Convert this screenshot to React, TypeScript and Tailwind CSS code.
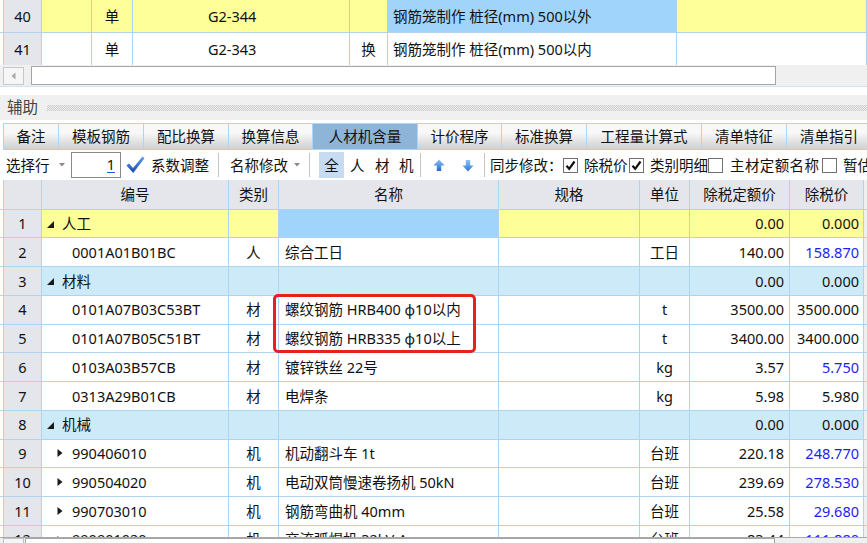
import React from "react";

const G = "border-[#afd4f1]";
const FONT = "font-['Noto_Sans','Noto_Sans_CJK_SC',sans-serif]";

function TriGroup() {
  return (
    <svg width="7" height="7" viewBox="0 0 7 7" className="shrink-0 mt-[2px]">
      <polygon points="7,0 7,7 0,7" fill="#1a1a1a" />
    </svg>
  );
}

function TriRight() {
  return (
    <svg width="6" height="10" viewBox="0 0 6 10" className="shrink-0">
      <polygon points="0.5,1 5.5,5 0.5,9" fill="#1a1a1a" />
    </svg>
  );
}

function Caret() {
  return (
    <svg width="6" height="4" viewBox="0 0 6 4" className="shrink-0">
      <polygon points="0,0 6,0 3,3.5" fill="#8a8a8a" />
    </svg>
  );
}

function BlueCheck() {
  return (
    <svg width="19" height="18" viewBox="0 0 19 18" className="shrink-0">
      <defs>
        <linearGradient id="bc" x1="0" y1="0" x2="0" y2="1">
          <stop offset="0" stopColor="#5f9ff0" />
          <stop offset="1" stopColor="#1448b0" />
        </linearGradient>
      </defs>
      <polygon points="0.5,9.5 3,7.5 7,12 16.5,0.5 18.5,2.2 7.2,17" fill="url(#bc)" />
    </svg>
  );
}

function ArrowIcon({ down }: { down?: boolean }) {
  return (
    <svg width="12" height="13" viewBox="0 0 12 13" className="shrink-0" style={down ? { transform: "rotate(180deg)" } : undefined}>
      <defs>
        <linearGradient id={down ? "ad" : "au"} x1="0" y1="0" x2="0" y2="1">
          <stop offset="0" stopColor={down ? "#2f74d6" : "#8cc4f6"} />
          <stop offset="1" stopColor={down ? "#8cc4f6" : "#2568cc"} />
        </linearGradient>
      </defs>
      <polygon points="6,0.5 11.5,6.5 8.2,6.5 8.2,12 3.8,12 3.8,6.5 0.5,6.5" fill={`url(#${down ? "ad" : "au"})`} />
    </svg>
  );
}

function CheckBox({ checked }: { checked?: boolean }) {
  return (
    <div className="w-[15px] h-[15px] shrink-0 border border-[#707070] bg-white flex items-center justify-center">
      {checked && (
        <svg width="11" height="11" viewBox="0 0 11 11">
          <path d="M1.5 5.8 L4.2 8.8 L9.5 1.5" stroke="#111" strokeWidth="2.2" fill="none" />
        </svg>
      )}
    </div>
  );
}

function Sep() {
  return <div className="w-px h-[24px] bg-[#c4c4c4] shrink-0" />;
}

type RowT = {
  n: string;
  kind: "yellow" | "group" | "item" | "mach";
  code?: string;
  type?: string;
  name?: string;
  unit?: string;
  p1?: string;
  p2?: string;
  blue?: boolean;
};

const rows: RowT[] = [
  { n: "1", kind: "yellow", code: "人工", p1: "0.00", p2: "0.000" },
  { n: "2", kind: "item", code: "0001A01B01BC", type: "人", name: "综合工日", unit: "工日", p1: "140.00", p2: "158.870", blue: true },
  { n: "3", kind: "group", code: "材料", p1: "0.00", p2: "0.000" },
  { n: "4", kind: "item", code: "0101A07B03C53BT", type: "材", name: "螺纹钢筋 HRB400 φ10以内", unit: "t", p1: "3500.00", p2: "3500.000" },
  { n: "5", kind: "item", code: "0101A07B05C51BT", type: "材", name: "螺纹钢筋 HRB335 φ10以上", unit: "t", p1: "3400.00", p2: "3400.000" },
  { n: "6", kind: "item", code: "0103A03B57CB", type: "材", name: "镀锌铁丝 22号", unit: "kg", p1: "3.57", p2: "5.750", blue: true },
  { n: "7", kind: "item", code: "0313A29B01CB", type: "材", name: "电焊条", unit: "kg", p1: "5.98", p2: "5.980" },
  { n: "8", kind: "group", code: "机械", p1: "0.00", p2: "0.000" },
  { n: "9", kind: "mach", code: "990406010", type: "机", name: "机动翻斗车 1t", unit: "台班", p1: "220.18", p2: "248.770", blue: true },
  { n: "10", kind: "mach", code: "990504020", type: "机", name: "电动双筒慢速卷扬机 50kN", unit: "台班", p1: "239.69", p2: "278.530", blue: true },
  { n: "11", kind: "mach", code: "990703010", type: "机", name: "钢筋弯曲机 40mm", unit: "台班", p1: "25.58", p2: "29.680", blue: true },
  { n: "12", kind: "mach", code: "990901020", type: "机", name: "交流弧焊机 32kV·A", unit: "台班", p1: "83.44", p2: "111.880", blue: true },
];

function BodyRow({ r }: { r: RowT }) {
  const bg =
    r.kind === "yellow" ? "bg-[#ffff99]" : r.kind === "group" ? "bg-[#cdeaf8]" : "bg-white";
  const nameBg = r.kind === "yellow" ? "bg-[#a0d4fb]" : bg;
  const cell = `shrink-0 h-full border-r ${G} flex items-center`;
  const isGroup = r.kind === "yellow" || r.kind === "group";
  return (
    <div className={`flex h-[28.75px] shrink-0 border-b ${G}`}>
      <div className={`w-[4px] shrink-0 h-full border-r ${G} bg-white`} />
      <div className={`${cell} w-[38px] bg-[#e4e6eb] justify-center`}>{r.n}</div>
      <div className={`${cell} w-[187px] ${bg}`}>
        {isGroup ? (
          <>
            <div className="ml-[5px]">
              <TriGroup />
            </div>
            <span className="ml-[8px]">{r.code}</span>
          </>
        ) : r.kind === "mach" ? (
          <>
            <div className="ml-[15px]">
              <TriRight />
            </div>
            <span className="ml-[9px]">{r.code}</span>
          </>
        ) : (
          <span className="ml-[30px]">{r.code}</span>
        )}
      </div>
      <div className={`${cell} w-[50px] ${bg} justify-center`}>{r.type}</div>
      <div className={`${cell} w-[220px] ${nameBg} pl-[6px] whitespace-nowrap`}>{r.name}</div>
      <div className={`${cell} w-[141px] ${bg}`} />
      <div className={`${cell} w-[50px] ${bg} justify-center`}>{r.unit}</div>
      <div className={`${cell} w-[100px] ${bg} justify-end pr-[5px]`}>{r.p1}</div>
      <div className={`${cell} w-[74px] ${bg} justify-end pr-[4px] ${r.blue ? "text-[#1e1ef0]" : ""}`}>{r.p2}</div>
      <div className="flex-1 h-full bg-[#f0f0f0]" />
    </div>
  );
}

const tabs: [string, number][] = [
  ["备注", 56],
  ["模板钢筋", 85],
  ["配比换算", 85],
  ["换算信息", 84],
  ["人材机含量", 105],
  ["计价程序", 84],
  ["标准换算", 85],
  ["工程量计算式", 115],
  ["清单特征", 85],
  ["清单指引", 85],
];

export default function App() {
  const tcell = `shrink-0 h-full border-r ${G} flex items-center`;
  return (
    <div className={`relative w-[867px] h-[543px] overflow-hidden bg-white text-[#111] ${FONT} text-[14.5px] leading-none`}>
      {/* top table */}
      <div className="flex flex-col">
        <div className={`flex h-[33px] border-b ${G}`}>
          <div className={`w-[4px] shrink-0 border-r ${G} bg-white`} />
          <div className={`${tcell} w-[38px] bg-[#e4e6eb] justify-center`}>40</div>
          <div className={`${tcell} w-[50px] bg-[#ffff99]`} />
          <div className={`${tcell} w-[41px] bg-[#ffff99] justify-center`}>单</div>
          <div className={`${tcell} w-[217px] bg-[#ffff99] pl-[75px]`}>G2-344</div>
          <div className={`${tcell} w-[38px] bg-[#ffff99]`} />
          <div className={`${tcell} w-[289px] bg-[#a0d4fb] pl-[5px] whitespace-nowrap`}>钢筋笼制作 桩径(mm) 500以外</div>
          <div className={`${tcell} flex-1 bg-[#ffff99]`} />
        </div>
        <div className="flex h-[32px]">
          <div className={`w-[4px] shrink-0 border-r ${G} bg-white`} />
          <div className={`${tcell} w-[38px] bg-[#e4e6eb] justify-center`}>41</div>
          <div className={`${tcell} w-[50px] bg-white`} />
          <div className={`${tcell} w-[41px] bg-white justify-center`}>单</div>
          <div className={`${tcell} w-[217px] bg-white pl-[75px]`}>G2-343</div>
          <div className={`${tcell} w-[38px] bg-white justify-center`}>换</div>
          <div className={`${tcell} w-[289px] bg-white pl-[5px] whitespace-nowrap`}>钢筋笼制作 桩径(mm) 500以内</div>
          <div className={`${tcell} flex-1 bg-white`} />
        </div>
      </div>

      {/* top horizontal scrollbar */}
      <div className="h-[22px] bg-[#f0f0f0] flex items-center border-b border-[#cfe4f5]">
        <div className="ml-[3px] w-[21px] h-[18px] border border-[#c8c8c8] bg-[#f6f6f6] flex items-center justify-center">
          <svg width="5" height="8" viewBox="0 0 5 8">
            <polygon points="4.5,0.5 4.5,7.5 0.5,4" fill="#a8a8a8" />
          </svg>
        </div>
        <div className="ml-[7px] w-[745px] h-[19px] border border-[#a5a5a5] bg-white" />
      </div>
      <div className="h-[8px] bg-white" />

      {/* 辅助 bar */}
      <div className="h-[25px] bg-[#f0f0f0] flex items-center">
        <span className="ml-[7px] text-[15.5px] text-[#444]">辅助</span>
        <div className="ml-[9px] flex-1 h-[6px] bg-[repeating-conic-gradient(#cbcbcb_0_25%,#f0f0f0_0_50%)] bg-[length:2px_2px]" />
      </div>
      <div className="h-[3px] bg-white" />

      {/* tabs */}
      <div className="flex h-[27px]">
        <div className="w-[3px] shrink-0" />
        {tabs.map(([t, w], i) => {
          const sel = t === "人材机含量";
          return (
            <div
              key={t}
              style={{ width: w }}
              className={`shrink-0 h-full border-y border-r ${G} ${i === 0 ? "border-l" : ""} flex items-center justify-center whitespace-nowrap ${
                sel
                  ? "bg-[#8eb4d7] text-[#111]"
                  : "bg-linear-to-b from-[#f8f8f8] from-35% to-[#d0d0d0]"
              }`}
            >
              {t}
            </div>
          );
        })}
      </div>

      {/* toolbar */}
      <div className="flex items-center h-[30px] whitespace-nowrap">
        <span className="ml-[6px] w-[44px] shrink-0">选择行</span>
        <div className="ml-[9px]">
          <Caret />
        </div>
        <div className="ml-[6px] w-[50px] h-[26px] shrink-0 border border-[#8a8a8a] bg-white flex items-center justify-end pr-[5px]">
          <span className="border-b border-[#2060d0]">1</span>
        </div>
        <div className="ml-[5px]">
          <BlueCheck />
        </div>
        <span className="ml-[6px] w-[60px] shrink-0">系数调整</span>
        <div className="ml-[7px]">
          <Sep />
        </div>
        <span className="ml-[11px] w-[58px] shrink-0">名称修改</span>
        <div className="ml-[6px]">
          <Caret />
        </div>
        <div className="ml-[9px]">
          <Sep />
        </div>
        <div className="ml-[9px] w-[25px] h-[26px] shrink-0 bg-[#c7dcf0] flex items-center justify-center">全</div>
        <span className="ml-[6px] w-[15px] shrink-0">人</span>
        <span className="ml-[10px] w-[15px] shrink-0">材</span>
        <span className="ml-[9px] w-[15px] shrink-0">机</span>
        <div className="ml-[6px]">
          <Sep />
        </div>
        <div className="ml-[12px]">
          <ArrowIcon />
        </div>
        <div className="ml-[17px]">
          <ArrowIcon down />
        </div>
        <div className="ml-[10px]">
          <Sep />
        </div>
        <span className="ml-[5px] w-[73px] shrink-0">同步修改：</span>
        <CheckBox checked />
        <span className="ml-[6px] w-[44px] shrink-0">除税价</span>
        <div className="ml-[1px]">
          <CheckBox checked />
        </div>
        <span className="ml-[6px] w-[58px] shrink-0">类别明细</span>
        <CheckBox />
        <span className="ml-[7px] w-[89px] shrink-0 tracking-[0.4px]">主材定额名称</span>
        <div className="ml-[3px]">
          <CheckBox />
        </div>
        <span className="ml-[6px] shrink-0">暂估</span>
      </div>

      {/* lower table */}
      <div className="h-[357px] overflow-hidden flex flex-col">
        <div className={`flex h-[29.5px] shrink-0 border-b ${G} bg-[#e4e6eb]`}>
          <div className={`w-[4px] shrink-0 h-full border-r ${G} bg-white`} />
          <div className={`w-[38px] shrink-0 h-full border-r ${G}`} />
          {[
            ["编号", 187],
            ["类别", 50],
            ["名称", 220],
            ["规格", 141],
            ["单位", 50],
            ["除税定额价", 100],
            ["除税价", 74],
          ].map(([t, w]) => (
            <div
              key={t as string}
              style={{ width: w as number }}
              className={`shrink-0 h-full border-r ${G} flex items-center justify-center`}
            >
              {t}
            </div>
          ))}
          <div className="flex-1 h-full bg-[#f0f0f0]" />
        </div>
        {rows.map((r) => (
          <BodyRow key={r.n} r={r} />
        ))}
      </div>

      {/* bottom scrollbar */}
      <div className="h-[6px] border-t border-[#a8a8a8] bg-[#f0f0f0] flex">
        <div className="ml-[3px] w-[21px] h-[10px] border border-[#c0c0c0] bg-[#f6f6f6]" />
        <div className="ml-[1px] w-[750px] h-[10px] border border-[#a5a5a5] bg-white" />
      </div>

      {/* red highlight box */}
      <div className="absolute left-[273px] top-[294px] w-[203px] h-[59px] border-[3px] border-[#e5231c] rounded-[5px]" />
    </div>
  );
}
